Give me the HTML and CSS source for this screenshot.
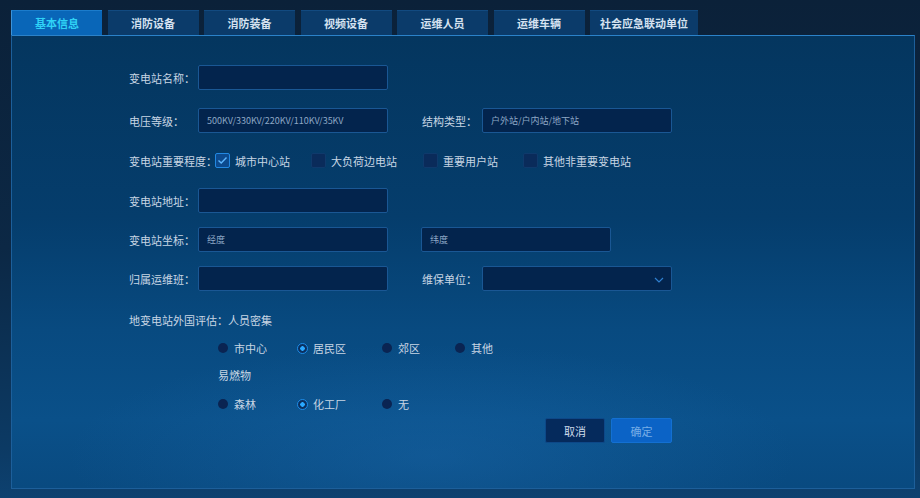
FILE: index.html
```html
<!DOCTYPE html>
<html lang="zh-CN">
<head>
    <meta charset="UTF-8">
    <meta name="viewport" content="width=device-width, initial-scale=1.0">
    <title>基本信息</title>
    <link rel="stylesheet" href="styles.css">
</head>
<body>

<div class="tabs">
    <div class="tab active">基本信息</div>
    <div class="tab">消防设备</div>
    <div class="tab">消防装备</div>
    <div class="tab">视频设备</div>
    <div class="tab">运维人员</div>
    <div class="tab">运维车辆</div>
    <div class="tab">社会应急联动单位</div>
</div>

<div class="panel">
    <div class="form">
        <div class="row gap-18">
            <label class="label">变电站名称：</label>
            <div class="input"></div>
        </div>
        <div class="row gap-15">
            <label class="label">电压等级：</label>
            <div class="input"><span class="value">500KV/330KV/220KV/110KV/35KV</span></div>
            <label class="label label-right">结构类型：</label>
            <div class="input"><span class="value">户外站/户内站/地下站</span></div>
        </div>
        <div class="row gap-15">
            <label class="label label-wide">变电站重要程度：</label>
            <div class="checks">
                <div class="check-item w96"><span class="box checked"><svg width="11" height="9" viewBox="0 0 11 9"><path d="M1.5 4.5 L4.2 7 L9.5 1.5" fill="none" stroke="#5cb6ff" stroke-width="1.4"/></svg></span>城市中心站</div>
                <div class="check-item w112"><span class="box"></span>大负荷边电站</div>
                <div class="check-item w100"><span class="box"></span>重要用户站</div>
                <div class="check-item"><span class="box"></span>其他非重要变电站</div>
            </div>
        </div>
        <div class="row gap-14">
            <label class="label">变电站地址：</label>
            <div class="input"></div>
        </div>
        <div class="row gap-14">
            <label class="label">变电站坐标：</label>
            <div class="input"><span class="value">经度</span></div>
            <div class="input input-lat"><span class="value">纬度</span></div>
        </div>
        <div class="row">
            <label class="label">归属运维班：</label>
            <div class="input"></div>
            <label class="label label-right">维保单位：</label>
            <div class="input select">
                <svg class="arrow" width="10" height="6" viewBox="0 0 10 6"><path d="M1 1 L5 5 L9 1" fill="none" stroke="#2f7fcf" stroke-width="1.2"/></svg>
            </div>
        </div>

        <div class="section-title">地变电站外国评估：人员密集</div>
        <div class="radios">
            <div class="radio-item"><span class="dot"></span>市中心</div>
            <div class="radio-item"><span class="dot on"></span>居民区</div>
            <div class="radio-item"><span class="dot"></span>郊区</div>
            <div class="radio-item"><span class="dot"></span>其他</div>
        </div>
        <div class="group-title">易燃物</div>
        <div class="radios">
            <div class="radio-item"><span class="dot"></span>森林</div>
            <div class="radio-item"><span class="dot on"></span>化工厂</div>
            <div class="radio-item"><span class="dot"></span>无</div>
        </div>

        <div class="buttons">
            <button class="btn btn-cancel">取消</button>
            <button class="btn btn-ok">确定</button>
        </div>
    </div>
</div>

</body>
</html>
```

FILE: styles.css
```css
body {
    margin: 0;
    width: 920px;
    height: 498px;
    overflow: hidden;
    font-family: "Noto Sans CJK SC", "Liberation Sans", sans-serif;
    background: linear-gradient(180deg, #0b2139 0%, #0c2845 50%, #0c3a64 90%, #0d4170 100%);
}
.tabs {
    display: flex;
    gap: 5.5px;
    padding: 10px 0 0 11px;
    height: 25px;
}
.tab {
    min-width: 91px;
    height: 25px;
    padding: 0 10px;
    box-sizing: border-box;
    display: flex;
    align-items: center;
    justify-content: center;
    font-size: 11px;
    font-weight: bold;
    color: #d5e2f0;
    background-color: #0b3b6a;
    border-top: 1px solid #124a80;
}
.tab.active {
    color: #2fd2f6;
    background-color: #0966b8;
    border-top: 1px solid #1b7ccc;
    border-left: 1px solid #3d93d8;
}
.panel {
    margin-left: 11px;
    width: 904px;
    height: 454px;
    box-sizing: border-box;
    border: 1px solid #1d5f9a;
    border-top: 1px solid #2b82c9;
    background:
        radial-gradient(ellipse 520px 160px at 420px 420px, rgba(30, 110, 180, 0.35), rgba(30, 110, 180, 0) 70%),
        linear-gradient(180deg, #04365f 0%, #053d6c 40%, #084a80 65%, #0a5089 85%, #094a80 100%);
    color: #c8d6e4;
}
.form {
    width: 543px;
    padding: 29px 0 0 117px;
}
.row {
    display: flex;
    align-items: center;
    height: 25px;
}
.gap-18 { margin-bottom: 18px; }
.gap-15 { margin-bottom: 15px; }
.gap-14 { margin-bottom: 14px; }
.label {
    width: 69px;
    font-size: 11px;
    color: #c8d6e4;
    white-space: nowrap;
    flex-shrink: 0;
}
.label-right {
    width: 60px;
    margin-left: 34px;
}
.label-wide {
    width: 86px;
}
.input {
    position: relative;
    width: 190px;
    height: 25px;
    box-sizing: border-box;
    background-color: #03244d;
    border: 1px solid #1a5794;
    border-radius: 2px;
    padding-left: 8px;
    display: flex;
    align-items: center;
    flex-shrink: 0;
}
.input-lat {
    margin-left: 33px;
}
.value {
    font-size: 9px;
    color: #8ea8c6;
    white-space: nowrap;
}
.select .arrow {
    position: absolute;
    right: 7px;
    top: 10px;
}
.checks {
    display: flex;
    align-items: center;
}
.check-item {
    display: flex;
    align-items: center;
    font-size: 11px;
    color: #c8d6e4;
    white-space: nowrap;
}
.w96 { width: 96px; }
.w112 { width: 112px; }
.w100 { width: 100px; }
.box {
    width: 15px;
    height: 15px;
    box-sizing: border-box;
    background-color: #0a2b5a;
    border: 1px solid #0f3a6c;
    border-radius: 2px;
    margin-right: 5px;
    display: flex;
    align-items: center;
    justify-content: center;
}
.box.checked {
    background-color: #0c4a8e;
    border-color: #2288e2;
}
.section-title {
    margin-top: 22px;
    font-size: 11px;
    line-height: 14px;
    color: #c8d6e4;
}
.radios {
    display: grid;
    grid-template-columns: 79px 85px 73px auto;
    margin-left: 89px;
    margin-top: 14px;
    font-size: 11px;
    line-height: 14px;
}
.radio-item {
    display: flex;
    align-items: center;
    color: #c8d6e4;
}
.dot {
    width: 10px;
    height: 10px;
    border-radius: 50%;
    background-color: #0a2452;
    margin-right: 6px;
    box-sizing: border-box;
}
.dot.on {
    width: 11px;
    height: 11px;
    border: 1px solid #1c8ae6;
    background: radial-gradient(circle, #2aa8ff 0, #2aa8ff 2px, #0a3060 2.5px);
    margin-right: 5px;
}
.group-title {
    margin-left: 89px;
    margin-top: 13px;
    font-size: 11px;
    line-height: 14px;
    color: #c8d6e4;
}
.radios + .buttons {
    margin-top: 7px;
}
.group-title + .radios {
    margin-top: 15px;
}
.buttons {
    display: flex;
    justify-content: flex-end;
    gap: 6px;
}
.btn {
    width: 60px;
    height: 25px;
    border-radius: 2px;
    font-family: "Noto Sans CJK SC", "Liberation Sans", sans-serif;
    font-size: 11px;
    cursor: pointer;
}
.btn-cancel {
    background-color: #052a5c;
    border: 1px solid #0d4888;
    color: #cfdcea;
}
.btn-ok {
    width: 61px;
    background-color: #0b63c6;
    border: 1px solid #1370d2;
    color: #78aee6;
}
```
